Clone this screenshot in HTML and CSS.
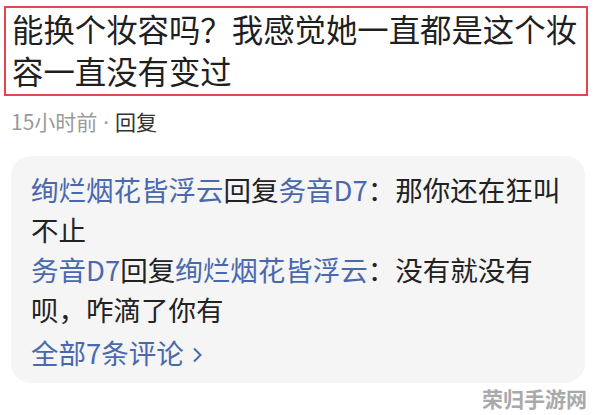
FILE: index.html
```html
<!DOCTYPE html>
<html lang="zh-CN">
<head>
    <meta charset="UTF-8">
    <meta name="viewport" content="width=device-width, initial-scale=1.0">
    <title>评论</title>
    <link rel="stylesheet" href="styles.css">
</head>
<body>
    <div class="page">
        <div class="comment-main">
            能换个妆容吗？我感觉她一直都是这个妆容一直没有变过
        </div>

        <div class="comment-meta">
            <span class="time">15小时前<span class="dot">·</span></span><span class="reply-btn">回复</span>
        </div>

        <div class="reply-box">
            <p class="reply"><span class="user">绚烂烟花皆浮云</span>回复<span class="user">务音D7</span>：那你还在狂叫不止</p>
            <p class="reply"><span class="user">务音D7</span>回复<span class="user">绚烂烟花皆浮云</span>：没有就没有呗，咋滴了你有</p>
            <a href="#" class="more-link">全部7条评论
                <svg class="arrow" width="12" height="18" viewBox="0 0 12 18">
                    <path d="M3 2.5 L9.5 9 L3 15.5" fill="none" stroke="#4a69ad" stroke-width="2"/>
                </svg>
            </a>
        </div>
    </div>

    <!-- 水印 -->
    <div class="watermark">荣归手游网</div>
</body>
</html>
```

FILE: styles.css
```css
   body {
       margin: 0;
       background: #ffffff;
       font-family: 'Noto Sans CJK SC', 'Noto Sans', sans-serif;
       color: #222222;
       position: relative;
       min-height: 415px;
   }

   .page {
       padding: 6px 6px 0 4px;
   }

   /* 主评论 */
   .comment-main {
       border: 2px solid #e5464d;
       padding: 0 4px 2px 6px;
       font-size: 31.4px;
       line-height: 42px;
       color: #1f1f1f;
   }

   .comment-meta {
       margin: 10px 0 0 7px;
       font-size: 21px;
       line-height: 30px;
   }

   .time {
       color: #9a9a9a;
   }

   .dot {
       font-family: 'Noto Sans', sans-serif;
       margin: 0 6px;
   }

   .reply-btn {
       color: #333333;
   }

   /* 楼中楼回复 */
   .reply-box {
       margin: 19px 3px 0 7px;
       padding: 13px 20px 11px 20px;
       background: #f5f5f6;
       border-radius: 20px;
       font-size: 27.5px;
       line-height: 40px;
   }

   .reply {
       margin: 0;
       color: #222222;
   }

   .user {
       color: #4a69ad;
   }

   .more-link {
       display: block;
       margin-top: 3px;
       color: #4a69ad;
       text-decoration: none;
   }

   .arrow {
       margin-left: 1px;
   }

   .watermark {
       position: absolute;
       right: 7px;
       bottom: 5px;
       font-size: 21px;
       font-weight: bold;
       line-height: 24px;
       color: #a9a9a9;
   }
```
